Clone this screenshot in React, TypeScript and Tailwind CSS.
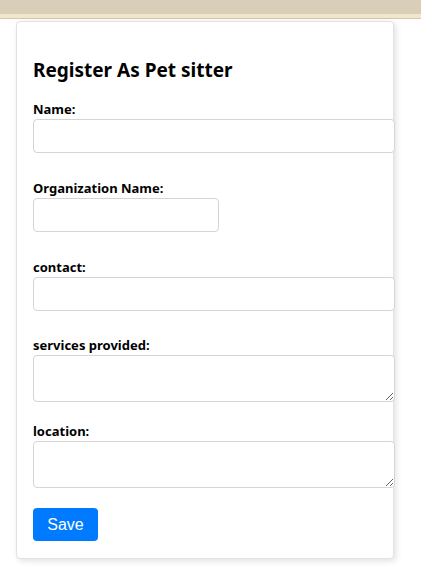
import React from 'react';

const labelCls = "block text-[13px] font-bold leading-[16px] text-black";
const inputCls = "block h-[34px] rounded-[4px] border border-[#d4d4d4] bg-white";
const areaCls = "block h-[47px] w-[362px] resize-y rounded-[4px] border border-[#d4d4d4] bg-white";

export default function App() {
  return (
    <div className="min-h-[573px] bg-white" style={{ fontFamily: '"Noto Sans", "Open Sans", sans-serif' }}>
      <div className="h-[14px] bg-[#d9ceb7]" />
      <div className="h-[4px] bg-[#f4e7c9]" />
      <div className="h-[1px] bg-[#cfc8bb]" />
      <div className="pl-4 pt-[2px]">
        <div className="w-[378px] rounded-[4px] border border-[#e2e2e2] bg-white pl-4 pt-[36px] pb-[17px] shadow-[2px_2px_6px_rgba(0,0,0,0.12)]">
          <h1 className="text-[19px] font-bold leading-[24px] text-black">Register As Pet sitter</h1>

          <form className="mt-[19px]">
            <label className={labelCls}>Name:</label>
            <input type="text" className={inputCls + " mt-[2px] w-[362px]"} />

            <label className={labelCls + " mt-[27px]"}>Organization Name:</label>
            <input type="text" className={inputCls + " mt-[2px] w-[186px]"} />

            <label className={labelCls + " mt-[27px]"}>contact:</label>
            <input type="text" className={inputCls + " mt-[2px] w-[362px]"} />

            <label className={labelCls + " mt-[26px]"}>services provided:</label>
            <textarea className={areaCls + " mt-[2px]"} />

            <label className={labelCls + " mt-[21px]"}>location:</label>
            <textarea className={areaCls + " mt-[2px]"} />

            <button
              type="button"
              className="mt-[20px] h-[33px] w-[65px] rounded-[4px] bg-[#007bff] text-[16px] text-white"
              style={{ fontFamily: '"Liberation Sans", Arial, sans-serif' }}
            >
              Save
            </button>
          </form>
        </div>
      </div>
    </div>
  );
}
